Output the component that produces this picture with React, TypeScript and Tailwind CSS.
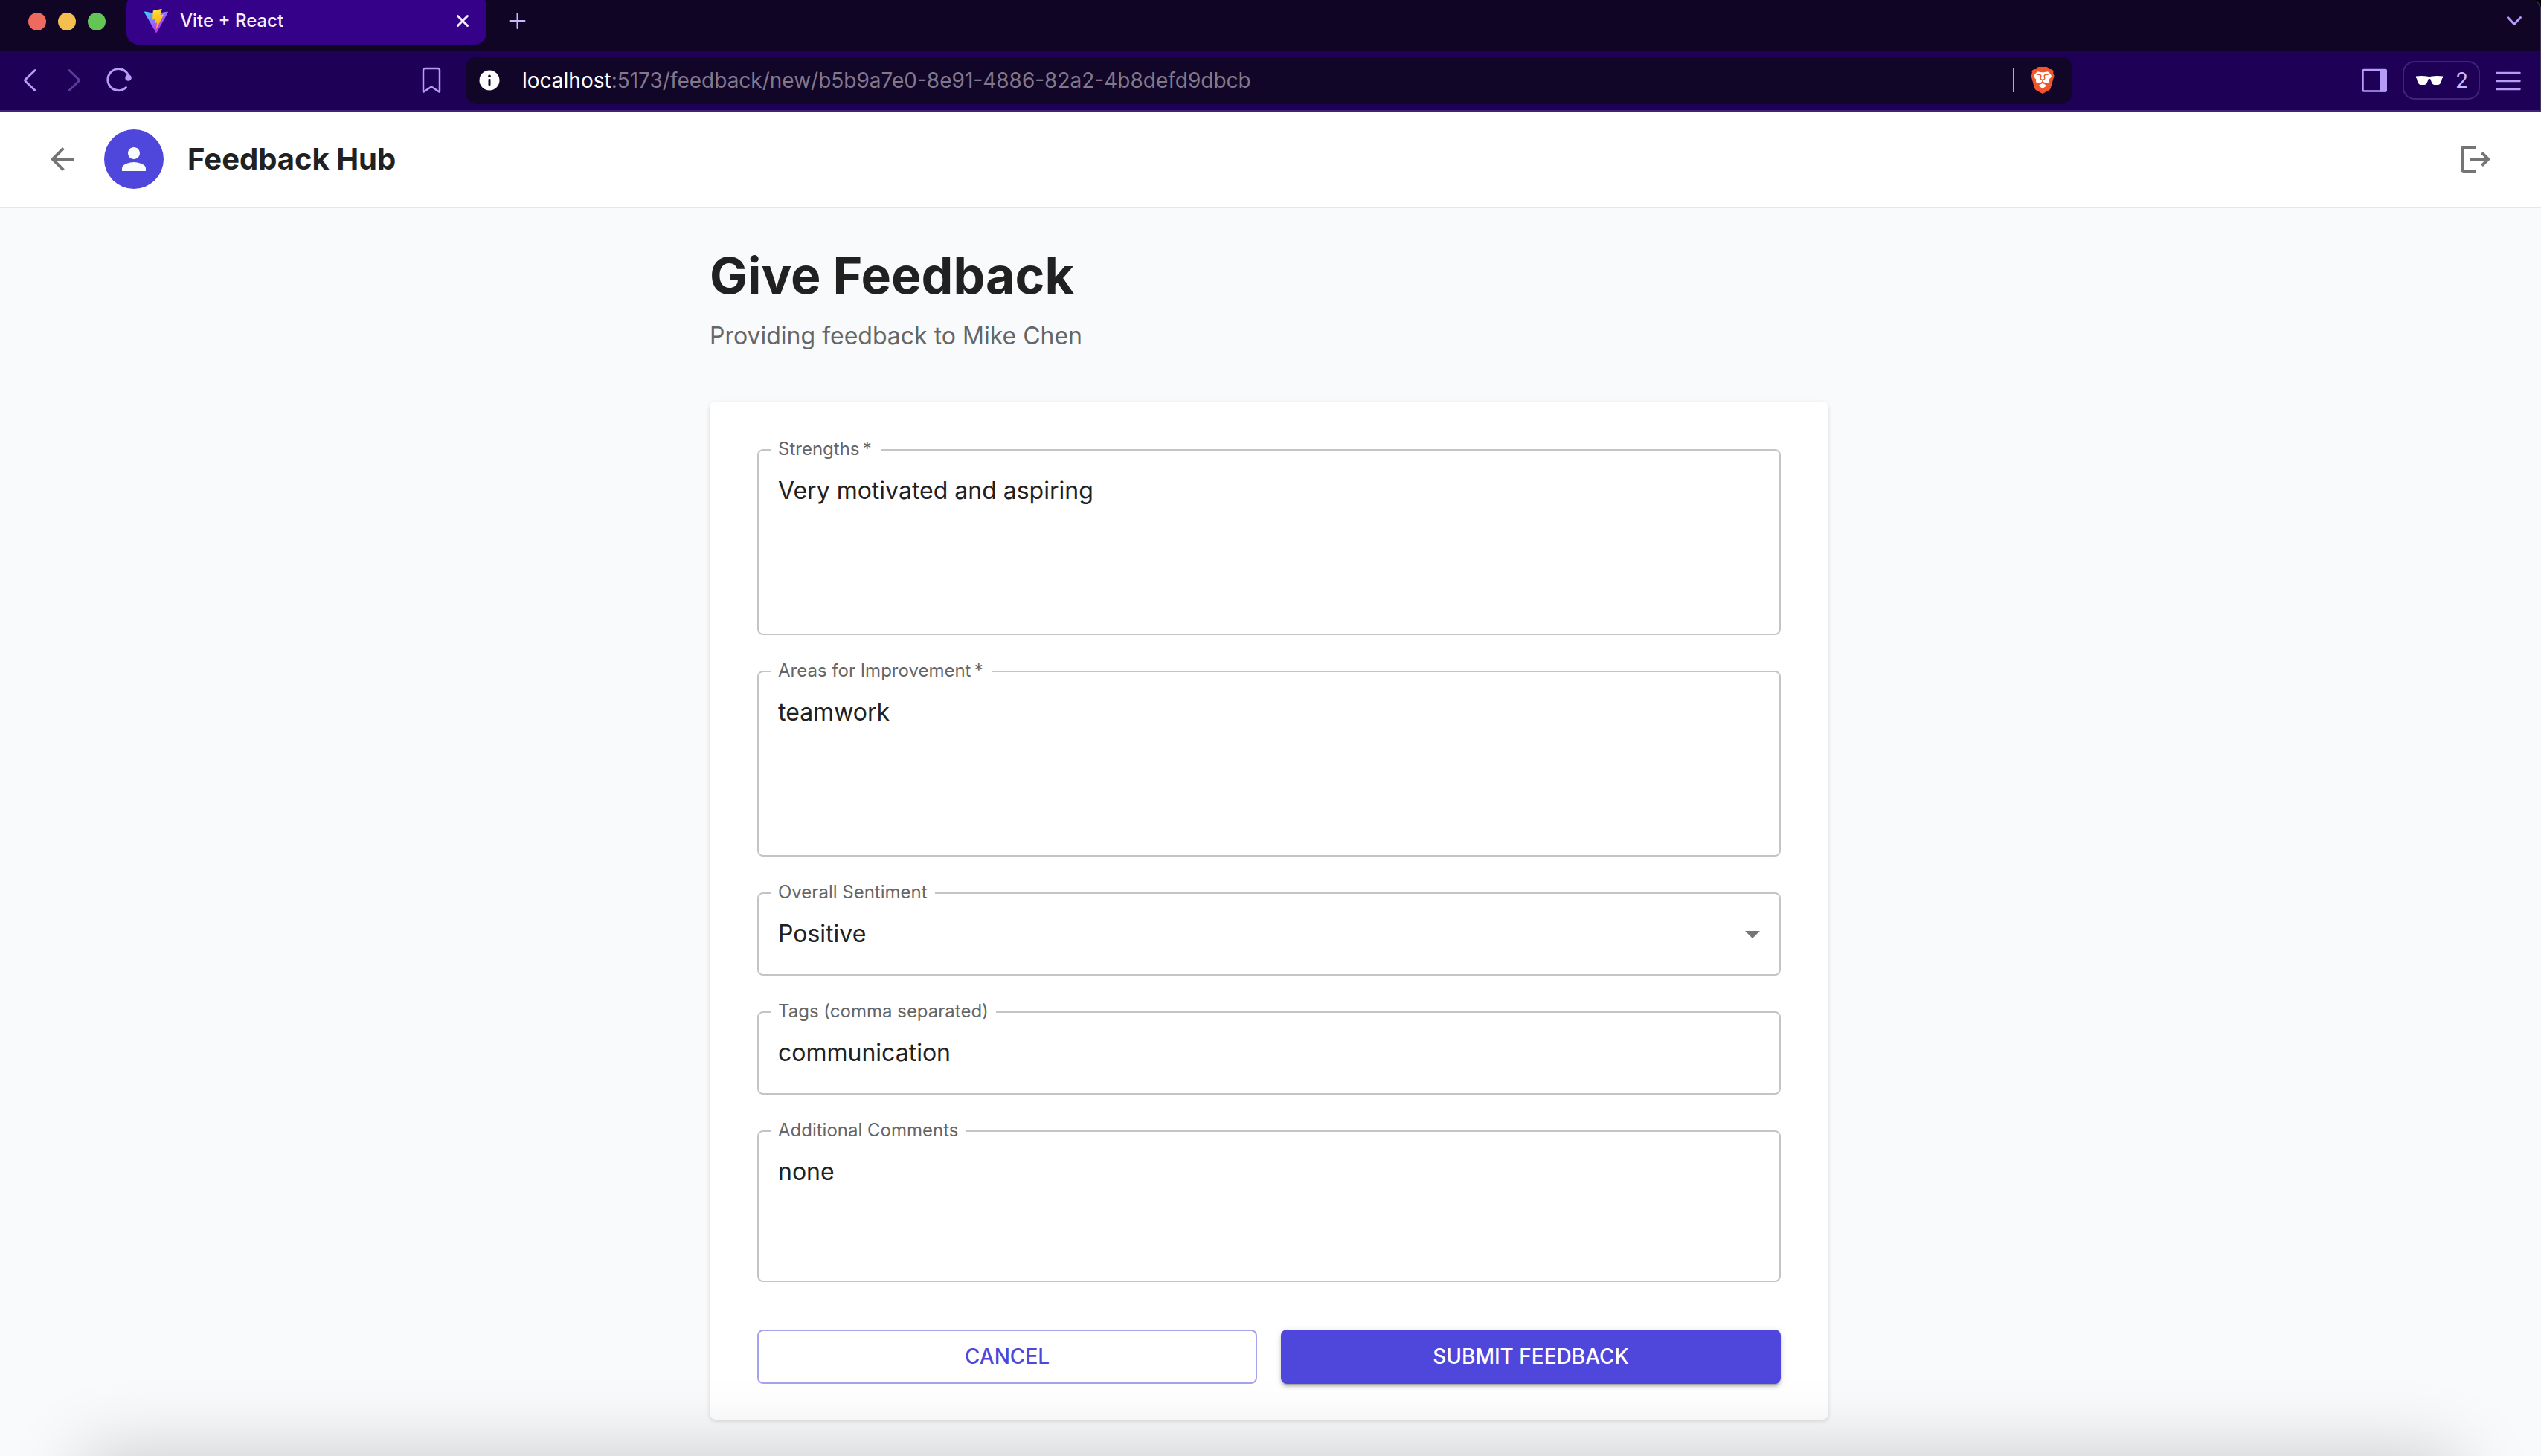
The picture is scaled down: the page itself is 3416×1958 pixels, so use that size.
import { useId, useState } from "react";
import type { ReactNode } from "react";

function ViteLogo() {
  return (
    <svg className="size-8 shrink-0" viewBox="0 0 256 257" aria-hidden="true">
      <defs>
        <linearGradient id="viteA" x1="-.828%" x2="57.636%" y1="7.652%" y2="78.411%">
          <stop offset="0%" stopColor="#41D1FF" />
          <stop offset="100%" stopColor="#BD34FE" />
        </linearGradient>
        <linearGradient id="viteB" x1="43.376%" x2="50.316%" y1="2.242%" y2="89.03%">
          <stop offset="0%" stopColor="#FFEA83" />
          <stop offset="8.333%" stopColor="#FFDD35" />
          <stop offset="100%" stopColor="#FFA800" />
        </linearGradient>
      </defs>
      <path
        fill="url(#viteA)"
        d="M255.153 37.938L134.897 252.976c-2.483 4.44-8.862 4.466-11.382.048L.875 37.958c-2.746-4.814 1.371-10.646 6.827-9.67l120.385 21.517a6.537 6.537 0 0 0 2.322-.004l117.867-21.483c5.438-.991 9.574 4.796 6.877 9.62Z"
      />
      <path
        fill="url(#viteB)"
        d="M185.432.063L96.44 17.501a3.268 3.268 0 0 0-2.634 3.014l-5.474 92.456a3.268 3.268 0 0 0 3.997 3.378l24.777-5.718c2.318-.535 4.413 1.507 3.936 3.838l-7.361 36.047c-.495 2.426 1.782 4.5 4.151 3.78l15.304-4.649c2.372-.72 4.652 1.36 4.15 3.788l-11.698 56.621c-.732 3.542 3.979 5.473 5.943 2.437l1.313-2.028l72.516-144.72c1.215-2.423-.88-5.186-3.54-4.672l-25.505 4.922c-2.396.462-4.435-1.77-3.759-4.114l16.646-57.705c.677-2.35-1.37-4.583-3.769-4.113Z"
      />
    </svg>
  );
}

function BraveLogo() {
  return (
    <svg className="h-9 w-8" viewBox="0 0 32 36" aria-hidden="true">
      <path
        fill="#f1562b"
        d="M10 0h12l3 3.2c2.4-.5 4.400.4 5.600 2.300L30.200 8l1.300 4-4.600 16.300c-.4 1.300-1.100 2.200-2.100 2.900L16 36l-8.800-4.800c-1-.7-1.700-1.600-2.100-2.900L.5 12l1.300-4-.4-2.500C2.600 3.600 4.600 2.700 7 3.200z"
      />
      <path
        fill="#fff"
        d="M9 6.300l4 .6c2 .3 4 .3 6 0l4-.6c1.600 1.400 3.200 3 4.600 5 .5.900.4 1.700-.2 2.400l-3.100 3.500c.9 1.300.9 2.400.2 3.200-.9 1-2.200 1.600-3.700 1.500L16 19.600l-4.800 2.300c-1.500.1-2.800-.5-3.700-1.500-.7-.8-.7-1.900.2-3.200l-3.100-3.500c-.6-.7-.7-1.500-.2-2.400 1.400-2 3-3.600 4.600-5z"
      />
      <path fill="#fff" d="M16 21.800l5 3c.2.200.2.500 0 .7l-4.300 2.900c-.4.300-1 .3-1.400 0L11 25.500c-.2-.2-.2-.5 0-.7z" />
      <path
        fill="none"
        stroke="#f1562b"
        strokeWidth="1.500"
        strokeLinejoin="round"
        d="M7.500 9.800l4.800.6c1.300.3 1.600 1 1.400 2.200l-.6 3c0 .7 1.400 1.400 2.900 2.100 1.500-.7 2.900-1.400 2.900-2.100l-.6-3c-.2-1.200.1-1.900 1.400-2.200l4.800-.6M16 17.700v2.600"
      />
    </svg>
  );
}

function ChromeButton({ label, children, className = "" }: { label: string; children: ReactNode; className?: string }) {
  return (
    <button type="button" aria-label={label} className={`flex size-12 shrink-0 items-center justify-center ${className}`}>
      <svg
        className="size-12"
        viewBox="0 0 48 48"
        fill="none"
        stroke="currentColor"
        strokeWidth="3"
        strokeLinecap="round"
        strokeLinejoin="round"
        aria-hidden="true"
      >
        {children}
      </svg>
    </button>
  );
}

function TabStrip() {
  return (
    <div className="flex h-[68px] items-start bg-[#110525] pr-0.5">
      <div className="flex h-[58px] items-center gap-4 pl-[38px]">
        <button type="button" aria-label="Close window" className="size-6 rounded-full bg-[#ed6a5e]" />
        <button type="button" aria-label="Minimise window" className="size-6 rounded-full bg-[#f4bf4f]" />
        <button type="button" aria-label="Zoom window" className="size-6 rounded-full bg-[#62c554]" />
      </div>
      <div className="-mt-2 ml-7 flex h-[68px] w-[484px] items-center rounded-[16px] bg-[#350189] pt-1 pr-2 pl-6">
        <ViteLogo />
        <span className="ml-4 flex-1 text-[24px] leading-8 font-medium text-[#f3efff]">Vite + React</span>
        <ChromeButton label="Close tab" className="text-[#f3efff]">
          <path d="M17.500 17.500l13 13M30.500 17.500l-13 13" />
        </ChromeButton>
      </div>
      <div className="ml-4 flex h-14 flex-1 items-center justify-between pr-2 text-[#b49cf8]">
        <ChromeButton label="New tab" className="text-[#c9b8fb]">
          <path strokeWidth="2" d="M25.500 14v20M15.500 24h20" />
        </ChromeButton>
        <ChromeButton label="Search tabs">
          <path d="M15.500 19.500l8.500 9 8.500-9" />
        </ChromeButton>
      </div>
    </div>
  );
}

function Toolbar() {
  return (
    <div className="flex h-[82px] items-center border-b-2 border-[#41237a] bg-[#1e0057] pr-0.5 text-[#b49cf8]">
      <div className="flex flex-1 items-center gap-3 pr-[22px] pl-4">
        <ChromeButton label="Back">
          <path d="M31 10.500L18.500 22.500c-.9.900-.9 2.100 0 3L31 37.500" />
        </ChromeButton>
        <ChromeButton label="Forward" className="text-[#5d3a9c]">
          <path d="M17 10.500l12.500 12c.9.900.9 2.100 0 3L17 37.500" />
        </ChromeButton>
        <ChromeButton label="Reload">
          <path d="M33.500 33.500A14.500 14.500 0 1 1 36 16" />
          <circle cx="36.500" cy="20.500" r="2.800" fill="currentColor" />
        </ChromeButton>
        <ChromeButton label="Bookmark this page" className="ml-auto">
          <path strokeWidth="2.500" d="M13 39V10.500Q13 8 15.500 8h17Q35 8 35 10.500V39q0 1-1 .3L24 32.500l-10 6.800q-1 .7-1-.3z" />
        </ChromeButton>
      </div>
      <div className="flex h-16 w-[2160px] items-center rounded-[16px] bg-[#120628] pr-6 pl-[18px]">
        <button type="button" aria-label="View site information">
          <svg className="size-7" viewBox="0 0 28 28" aria-hidden="true">
            <circle cx="14" cy="14" r="13.500" fill="#fff" />
            <circle cx="14" cy="8.300" r="1.800" fill="#120628" />
            <rect x="12.500" y="12" width="3" height="9" rx="1" fill="#120628" />
          </svg>
        </button>
        <div className="ml-[30px] flex-1 truncate text-[28px] leading-9 text-[#81788b]">
          <span className="text-white">localhost</span>:5173/feedback/new/b5b9a7e0-8e91-4886-82a2-4b8defd9dbcb
        </div>
        <div className="mr-[22px] h-8 w-0.5 bg-[#b3afb9]" />
        <button type="button" aria-label="Brave Shields">
          <BraveLogo />
        </button>
      </div>
      <div className="flex flex-1 items-center justify-end gap-3.5 pr-4 pl-[22px]">
        <ChromeButton label="Show sidebar">
          <rect x="8.500" y="10" width="31" height="28.500" rx="1.500" strokeWidth="2.500" />
          <path fill="currentColor" stroke="none" d="M31 9h8.500Q41 9 41 10.500v27.500q0 1.500-1.500 1.500H31z" />
        </ChromeButton>
        <button
          type="button"
          aria-label="Private windows, 2 open"
          className="flex h-[52px] w-[104px] items-center justify-between rounded-[16px] border-2 border-[#41237a] pr-3.5 pl-4 text-[28px] leading-8 text-[#c9b8fb]"
        >
          <svg className="h-3 w-9" viewBox="0 0 36 12" fill="#fff" aria-hidden="true">
            <path d="M0 .6Q8-.6 16 .8q2 .5 4 0Q28-.6 36 .6v2.200l-1 .6c-.5 3-1.300 5.300-2.600 7.100-.6.900-1.500 1.300-2.600 1.400h-5.200c-1.100-.1-2-.6-2.600-1.500-1.100-1.600-1.900-3.400-2.400-5.600-.3-1-2.900-1-3.200 0-.5 2.200-1.300 4-2.400 5.600-.6.900-1.500 1.400-2.600 1.500H6.200c-1.100-.1-2-.5-2.600-1.400C2.300 8.700 1.500 6.400 1 3.400l-1-.6z" />
          </svg>
          2
        </button>
        <ChromeButton label="Menu">
          <path d="M8.500 14h31M8.500 25h31M8.500 36h31" strokeWidth="2.500" />
        </ChromeButton>
      </div>
    </div>
  );
}

function MaterialIcon({ d, className }: { d: string; className?: string }) {
  return (
    <svg className={`size-12 fill-current ${className ?? ""}`} viewBox="0 0 24 24" aria-hidden="true">
      <path d={d} />
    </svg>
  );
}

function AppHeader() {
  return (
    <header className="flex h-[130px] items-center border-b-2 border-[#e4e6ec] bg-white pr-12 pl-11 text-[#757575]">
      <button type="button" aria-label="Go back" className="p-4">
        <MaterialIcon d="M20 11H7.830l5.590-5.590L12 4l-8 8 8 8 1.410-1.410L7.830 13H20v-2z" />
      </button>
      <div className="ml-4 flex size-20 items-center justify-center rounded-full bg-[#4f46db] text-[#f9fafc]">
        <MaterialIcon d="M12 12c2.210 0 4-1.790 4-4s-1.790-4-4-4-4 1.790-4 4 1.790 4 4 4zm0 2c-2.670 0-8 1.340-8 4v2h16v-2c0-2.660-5.330-4-8-4z" />
      </div>
      <div className="ml-8 flex-1 text-[40px] leading-[64px] font-bold text-[#212121]">Feedback Hub</div>
      <button type="button" aria-label="Log out" className="p-4">
        <MaterialIcon d="M17 7l-1.410 1.410L18.170 11H8v2h10.170l-2.580 2.580L17 17l5-5zM4 5h8V3H4c-1.100 0-2 .9-2 2v14c0 1.100.9 2 2 2h8v-2H4V5z" />
      </button>
    </header>
  );
}

const controlClass =
  "block w-full rounded-lg border-2 border-[#c4c4c4] bg-white px-[26px] py-[31px] text-[32px] leading-[46px] text-[#212121] outline-none";

function Field({ label, required, children }: { label: string; required?: boolean; children: (id: string) => ReactNode }) {
  const id = useId();
  return (
    <div className="relative">
      {children(id)}
      <label htmlFor={id} className="absolute -top-[18px] left-[18px] bg-white px-2.5 text-[24px] leading-9 text-[#666666]">
        {label}
        {required && <span className="pr-0.5">{"\u2009*"}</span>}
      </label>
    </div>
  );
}

function FeedbackForm() {
  const [strengths, setStrengths] = useState("Very motivated and aspiring");
  const [areas, setAreas] = useState("teamwork");
  const [sentiment, setSentiment] = useState("Positive");
  const [tags, setTags] = useState("communication");
  const [comments, setComments] = useState("none");

  return (
    <form
      onSubmit={(e) => e.preventDefault()}
      className="mt-16 flex flex-col gap-12 rounded-lg bg-white px-16 pt-16 pb-12 shadow-[0_2px_6px_rgba(0,0,0,0.1),0_2px_4px_rgba(0,0,0,0.04)]"
    >
      <Field label="Strengths" required>
        {(id) => (
          <textarea id={id} required rows={4} value={strengths} onChange={(e) => setStrengths(e.target.value)} className={`${controlClass} resize-none`} />
        )}
      </Field>
      <Field label="Areas for Improvement" required>
        {(id) => (
          <textarea id={id} required rows={4} value={areas} onChange={(e) => setAreas(e.target.value)} className={`${controlClass} resize-none`} />
        )}
      </Field>
      <Field label="Overall Sentiment">
        {(id) => (
          <>
            <select id={id} value={sentiment} onChange={(e) => setSentiment(e.target.value)} className={`${controlClass} appearance-none`}>
              <option>Positive</option>
              <option>Neutral</option>
              <option>Negative</option>
            </select>
            <MaterialIcon className="pointer-events-none absolute top-8 right-3.5 text-[#757575]" d="M7 10l5 5 5-5z" />
          </>
        )}
      </Field>
      <Field label="Tags (comma separated)">
        {(id) => <input id={id} type="text" value={tags} onChange={(e) => setTags(e.target.value)} className={controlClass} />}
      </Field>
      <Field label="Additional Comments">
        {(id) => (
          <textarea id={id} rows={3} value={comments} onChange={(e) => setComments(e.target.value)} className={`${controlClass} resize-none`} />
        )}
      </Field>
      <div className="mt-4 grid grid-cols-2 gap-8 text-[28px] leading-[49px] font-medium">
        <button type="button" className="rounded-lg border-2 border-[#a7a2ed] py-2.5 text-[#4f46db]">
          CANCEL
        </button>
        <button
          type="submit"
          className="rounded-lg bg-[#4f46db] py-3 text-white shadow-[0_6px_2px_-4px_rgba(0,0,0,0.2),0_4px_4px_rgba(0,0,0,0.14),0_2px_10px_rgba(0,0,0,0.12)]"
        >
          SUBMIT FEEDBACK
        </button>
      </div>
    </form>
  );
}

export default function App() {
  return (
    <div className="relative flex min-h-screen flex-col overflow-hidden bg-[#f9fafc] font-['Inter',sans-serif]">
      <div className="bg-black">
        <div className="overflow-hidden rounded-tr-[12px] border-r-2 border-[#41395a]">
          <TabStrip />
          <Toolbar />
        </div>
      </div>
      <AppHeader />
      <main className="flex-1 pr-1">
        <div className="mx-auto w-full max-w-[1600px] px-12 py-12">
          <h1 className="text-[68px] leading-[84px] font-bold text-[#212121]">Give Feedback</h1>
          <p className="mt-4 text-[32px] leading-[48px] text-[#666666]">Providing feedback to Mike Chen</p>
          <FeedbackForm />
        </div>
      </main>
      <div className="pointer-events-none absolute inset-x-28 top-full h-24 shadow-[0_0_100px_rgba(0,0,0,0.21)]" />
    </div>
  );
}
